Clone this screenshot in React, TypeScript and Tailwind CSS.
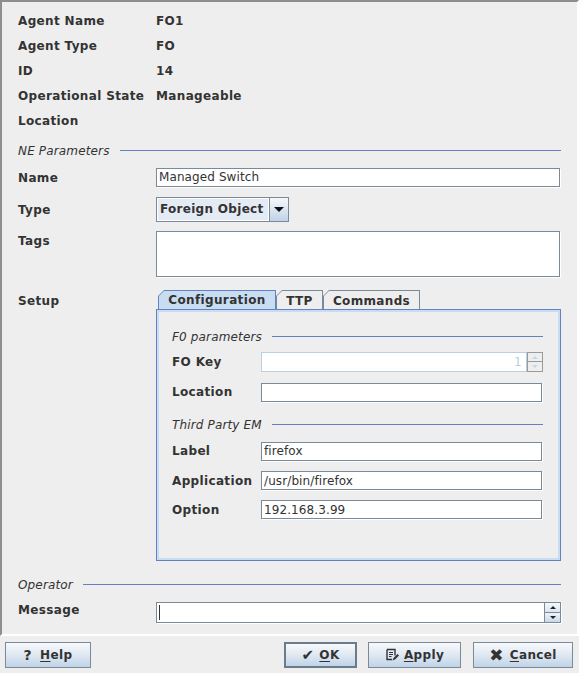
import React from 'react';

const field =
  'h-[19px] border border-[#7a8a99] bg-white shadow-[1px_1px_0_#ffffff] px-[2px] flex items-center text-[12px] text-[#333333] whitespace-nowrap tracking-[0.1px]';

function InfoRow({ label, value }: { label: string; value?: string }) {
  return (
    <div className="grid grid-cols-[138px_1fr] h-[25px] items-center font-bold">
      <span>{label}</span>
      <span>{value}</span>
    </div>
  );
}

function Titled({ title, gap }: { title: string; gap: string }) {
  return (
    <div className="flex items-center h-full">
      <span className="italic tracking-[0.15px] pt-[2px]">{title}</span>
      <div className={`flex-1 h-px bg-[#6382bf] ${gap}`} />
    </div>
  );
}

function UpArrow({ color }: { color: string }) {
  return <div className={`w-0 h-0 border-x-[3px] border-x-transparent border-b-[3px] ${color}`} />;
}

function DownArrow({ color }: { color: string }) {
  return <div className={`w-0 h-0 border-x-[3px] border-x-transparent border-t-[3px] ${color}`} />;
}

function Btn({ className, children }: { className: string; children: React.ReactNode }) {
  return (
    <button
      className={`h-[26px] flex items-center justify-center bg-linear-to-b from-[#f7f9fc] via-[#dfe8f2] to-[#c0d3e7] text-[12px] font-bold text-[#333333] ${className}`}
    >
      {children}
    </button>
  );
}

function ApplyIcon() {
  return (
    <svg width="14" height="14" viewBox="0 0 14 14" fill="none">
      <path d="M2 1.5h8v6" stroke="#333" strokeWidth="1.4" />
      <path d="M2 1.5v10h5" stroke="#333" strokeWidth="1.4" />
      <path d="M4 4.5h4M4 6.5h4M4 8.5h2.5" stroke="#333" strokeWidth="1.2" />
      <path d="M7.5 12.5l1-2.5 4-4 1.5 1.5-4 4z" fill="#333" />
    </svg>
  );
}

export default function App() {
  return (
    <div className="w-[579px] h-[673px] bg-[#eeeeee] flex flex-col font-['DejaVu_Sans',sans-serif] text-[12px] text-[#333333] tracking-[0.35px] overflow-hidden">
      <div className="h-[636px] shrink-0 border-2 border-t-[#8e8e8e] border-l-[#8e8e8e] border-r-white border-b-white pl-[16px] pr-[16px] pt-[6px] flex flex-col">
        <InfoRow label="Agent Name" value="FO1" />
        <InfoRow label="Agent Type" value="FO" />
        <InfoRow label="ID" value="14" />
        <InfoRow label="Operational State" value="Manageable" />
        <InfoRow label="Location" />

        <div className="mt-[5px] h-[24px]">
          <Titled title="NE Parameters" gap="ml-[10px]" />
        </div>

        <div className="grid grid-cols-[138px_1fr] h-[30px] items-center">
          <span className="font-bold pt-[2px]">Name</span>
          <div className={`${field} mr-px`}>Managed Switch</div>
        </div>

        <div className="grid grid-cols-[138px_1fr] h-[34px] items-center">
          <span className="font-bold pt-[2px]">Type</span>
          <div className="w-[133px] h-[25px] border border-[#7a8a99] flex">
            <div className="flex-1 bg-[#e4ebf4] border border-white flex items-center pl-[2px] font-bold tracking-[0.3px]">
              Foreign Object
            </div>
            <div className="w-[19px] border-l border-[#7a8a99] bg-linear-to-b from-[#f5f8fb] to-[#c0d3e7] flex items-center justify-center">
              <div className="w-0 h-0 border-x-[5px] border-x-transparent border-t-[5px] border-t-[#111111]" />
            </div>
          </div>
        </div>

        <div className="grid grid-cols-[138px_1fr] mt-[5px] items-start">
          <span className="font-bold leading-[18px] pt-px">Tags</span>
          <div className="h-[46px] border border-[#7a8a99] bg-white shadow-[1px_1px_0_#ffffff] mr-px" />
        </div>

        <div className="grid grid-cols-[138px_1fr] mt-[13px] items-start">
          <span className="font-bold leading-[20px] pt-px">Setup</span>
          <div className="flex flex-col">
            <div className="flex h-[19px] items-end pl-[2px]">
              <div className="relative z-10 -mb-px h-[20px] w-[118px] bg-[#6382bf] p-px [clip-path:polygon(6px_0,100%_0,100%_100%,0_100%,0_6px)]">
                <div className="h-full bg-[#c8ddf2] flex items-center justify-center font-bold [clip-path:polygon(5px_0,100%_0,100%_100%,0_100%,0_5px)]">
                  Configuration
                </div>
              </div>
              <div className="h-[19px] w-[47px] bg-[#7a8a99] pt-px pr-px pl-px [clip-path:polygon(6px_0,100%_0,100%_100%,0_100%,0_6px)]">
                <div className="h-full bg-[#eeeeee] flex items-center justify-center font-bold pt-px [clip-path:polygon(5px_0,100%_0,100%_100%,0_100%,0_5px)]">
                  TTP
                </div>
              </div>
              <div className="h-[19px] w-[97px] bg-[#7a8a99] pt-px pr-px pl-px [clip-path:polygon(6px_0,100%_0,100%_100%,0_100%,0_6px)]">
                <div className="h-full bg-[#eeeeee] flex items-center justify-center font-bold pt-px [clip-path:polygon(5px_0,100%_0,100%_100%,0_100%,0_5px)]">
                  Commands
                </div>
              </div>
            </div>
            <div className="h-[252px] border border-[#6382bf]">
              <div className="h-full border-2 border-[#c8ddf2] pl-[13px] pr-[15px] pt-[13px] flex flex-col">
                <div className="h-[22px]">
                  <Titled title="F0 parameters" gap="ml-[10px]" />
                </div>
                <div className="grid grid-cols-[89px_1fr] h-[30px] items-center">
                  <span className="font-bold">FO Key</span>
                  <div className="flex h-[20px]">
                    <div className="flex-1 border border-[#b8cfe5] bg-white flex items-center justify-end pr-[4px] text-[#b8cfe5]">
                      1
                    </div>
                    <div className="w-[16px] flex flex-col">
                      <div className="h-[10px] border border-[#9a9a9a] bg-[#eeeeee] flex items-center justify-center">
                        <UpArrow color="border-b-[#c8d6e5]" />
                      </div>
                      <div className="h-[10px] border border-t-0 border-[#9a9a9a] bg-[#eeeeee] flex items-center justify-center">
                        <DownArrow color="border-t-[#c8d6e5]" />
                      </div>
                    </div>
                  </div>
                </div>
                <div className="grid grid-cols-[89px_1fr] h-[30px] items-center">
                  <span className="font-bold">Location</span>
                  <div className={`${field} mr-px`} />
                </div>
                <div className="h-[29px] pt-[5px]">
                  <Titled title="Third Party EM" gap="ml-[10px]" />
                </div>
                <div className="grid grid-cols-[89px_1fr] h-[30px] items-center">
                  <span className="font-bold">Label</span>
                  <div className={`${field} mr-px`}>firefox</div>
                </div>
                <div className="grid grid-cols-[89px_1fr] h-[29px] items-center">
                  <span className="font-bold">Application</span>
                  <div className={`${field} mr-px`}>/usr/bin/firefox</div>
                </div>
                <div className="grid grid-cols-[89px_1fr] h-[29px] items-center">
                  <span className="font-bold">Option</span>
                  <div className={`${field} mr-px`}>192.168.3.99</div>
                </div>
              </div>
            </div>
          </div>
        </div>

        <div className="mt-[11px] h-[24px]">
          <Titled title="Operator" gap="ml-[10px]" />
        </div>

        <div className="grid grid-cols-[138px_1fr] mt-[6px] items-start">
          <span className="font-bold leading-[14px] pt-px">Message</span>
          <div className="h-[21px] flex border border-[#7a8a99] bg-white shadow-[1px_1px_0_#ffffff]">
            <div className="flex-1 flex items-center pl-[2px]">
              <div className="w-px h-[15px] bg-[#333333]" />
            </div>
            <div className="w-[16px] flex flex-col border-l border-[#7a8a99]">
              <div className="flex-1 bg-linear-to-b from-[#f5f8fb] to-[#dbe5f0] flex items-center justify-center border-b border-[#7a8a99]">
                <UpArrow color="border-b-[#222222]" />
              </div>
              <div className="flex-1 bg-linear-to-b from-[#eef3f8] to-[#c8d8e9] flex items-center justify-center">
                <DownArrow color="border-t-[#222222]" />
              </div>
            </div>
          </div>
        </div>
      </div>

      <div className="flex-1 flex items-start pt-[6px]">
        <Btn className="ml-[5px] w-[86px] border border-[#7a8a99] gap-[8px]">
          <span className="text-[14px]">?</span>
          <span>
            <span className="underline underline-offset-2">H</span>elp
          </span>
        </Btn>
        <div className="flex-1" />
        <Btn className="w-[73px] border-2 border-[#6a7b8c] gap-[5px]">
          <span className="text-[15px]">✔</span>
          <span>
            <span className="underline underline-offset-2">O</span>K
          </span>
        </Btn>
        <Btn className="ml-[11px] w-[93px] border border-[#7a8a99] gap-[5px]">
          <ApplyIcon />
          <span>
            <span className="underline underline-offset-2">A</span>pply
          </span>
        </Btn>
        <Btn className="ml-[12px] mr-[6px] w-[100px] border border-[#7a8a99] gap-[6px]">
          <span className="text-[17px] leading-none">✖</span>
          <span>
            <span className="underline underline-offset-2">C</span>ancel
          </span>
        </Btn>
      </div>
    </div>
  );
}
